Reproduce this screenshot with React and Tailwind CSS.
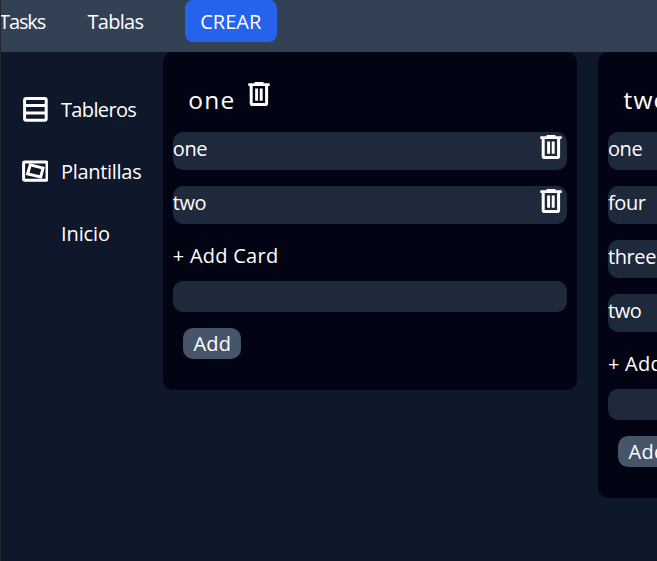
import React from "react";

function TrashIcon({ className }) {
  return (
    <svg viewBox="0 0 22 24" className={"block h-6 w-[22px] shrink-0 " + className} fill="none">
      <path d="M0.3 1.2h6.2V0h9v1.2h6.2v2.9H0.3z" fill="white" />
      <path d="M3.2 3v18.2q0 1.3 1.3 1.3h12.8q1.3 0 1.3-1.3V3" stroke="white" strokeWidth="3" />
      <path d="M8.6 6.6v12.2M13.2 6.6v12.2" stroke="white" strokeWidth="2.9" />
    </svg>
  );
}

function BoardIcon() {
  return (
    <svg viewBox="0 0 26 26" className="block h-[26px] w-[26px]" fill="none" stroke="white" strokeWidth="3">
      <rect x="2.6" y="1.5" width="21.6" height="21.8" rx="1.5" />
      <path d="M2 8.6h22M2 16h22" />
    </svg>
  );
}

function TemplateIcon() {
  return (
    <svg viewBox="0 0 26 26" className="block h-[26px] w-[26px]" fill="none" stroke="white" strokeWidth="3">
      <rect x="1.6" y="3.1" width="23.4" height="18.2" rx="1" />
      <path d="M8.3 5.9 21 9 18.7 18 5.6 15z" />
    </svg>
  );
}

function SideItem({ icon, label, spacing }) {
  return (
    <li className="flex h-[62px] items-center">
      <span className="w-[39px] shrink-0">{icon}</span>
      <span className={"pt-px leading-7 " + spacing}>{label}</span>
    </li>
  );
}

function Column({ title, cards }) {
  return (
    <section className="w-[414.5px] shrink-0 rounded-[10px] bg-[#020414] px-[10px] pb-[31px]">
      <header className="flex h-[79.5px] items-start pl-[15.5px]">
        <h2 className="mt-[31.5px] text-[24.5px] leading-8 tracking-[1.2px]">{title}</h2>
        <TrashIcon className="ml-[13px] mt-[29.5px]" />
      </header>
      <ul className="flex flex-col gap-4">
        {cards.map((card) => (
          <li key={card} className="flex h-[38px] items-start justify-between rounded-[10px] bg-[#1e293b] pr-[5.5px]">
            <span className="mt-[3.5px] leading-7 tracking-[-0.4px]">{card}</span>
            <TrashIcon className="mt-[3.5px]" />
          </li>
        ))}
      </ul>
      <p className="mt-[18.5px] leading-7 tracking-[0.25px]">+ Add Card</p>
      <input className="mt-[10.5px] block h-[31px] w-full rounded-[10px] bg-[#1e293b] outline-none" />
      <button className="ml-[10.5px] mt-[16px] flex h-[31px] w-[58px] items-center justify-center rounded-[10px] bg-[#475569] pt-[2px] tracking-[0.2px]">
        Add
      </button>
    </section>
  );
}

export default function App() {
  return (
    <div className="h-[561px] w-[657px] overflow-hidden border-l border-[#1f2630] bg-[#0f172a] font-['Open_Sans','Noto_Sans',sans-serif] text-[20px] text-white">
      <nav className="flex h-[52px] items-start bg-[#334155]">
        <a className="-ml-[2px] mt-[8px] w-[88.5px] leading-7 tracking-[-1.1px]">Tasks</a>
        <a className="mt-[8px] w-[97px] leading-7 tracking-[-0.7px]">Tablas</a>
        <button className="h-[41.5px] w-[92.5px] rounded-lg bg-[#2563eb] pt-[2px] leading-7">CREAR</button>
      </nav>
      <div className="flex items-start">
        <aside className="w-[161.8px] shrink-0 pl-[21px] pt-[26.5px]">
          <ul>
            <SideItem icon={<BoardIcon />} label="Tableros" spacing="tracking-[-0.65px]" />
            <SideItem icon={<TemplateIcon />} label="Plantillas" spacing="tracking-[-0.3px]" />
            <SideItem label="Inicio" spacing="tracking-[-0.1px]" />
          </ul>
        </aside>
        <main className="flex items-start gap-[20.7px]">
          <Column title="one" cards={["one", "two"]} />
          <Column title="two" cards={["one", "four", "three", "two"]} />
        </main>
      </div>
    </div>
  );
}
